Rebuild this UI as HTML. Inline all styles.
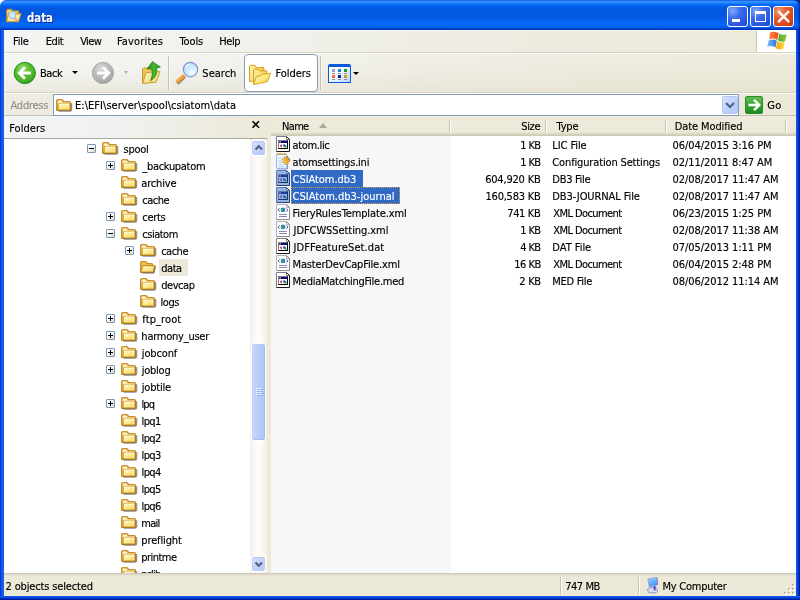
<!DOCTYPE html>
<html><head><meta charset="utf-8"><title>data</title>
<style>
*{box-sizing:border-box}
html,body{margin:0;padding:0}
body{width:800px;height:600px;overflow:hidden;background:#fff;position:relative;
 font-family:"DejaVu Sans Condensed","Liberation Sans",sans-serif;font-size:11px;color:#000;line-height:17px}
#root{position:absolute;left:0;top:0;width:800px;height:600px;will-change:transform;background:#ECE9D8;border-radius:6px 0 0 0}
.a{position:absolute}
.t{position:absolute;white-space:pre;height:17px;line-height:17px;-webkit-text-stroke:0.15px currentColor}
svg{position:absolute;overflow:visible}
#title{left:0;top:0;width:800px;height:30px;border-radius:6px 7px 0 0;box-shadow:inset -2px 0 2px -1px rgba(0,20,130,0.75);
 background:linear-gradient(to bottom,#0A4EDC 0%,#2C84FC 3%,#3C94FF 6%,#2086FF 10%,#0870FA 14%,#0562EE 20%,#0359E2 27%,#0357E0 55%,#0460EE 68%,#0468FA 78%,#0467F8 87%,#045CE8 91%,#0344CC 95.5%,#022EB6 100%)}
#rebar{left:4px;top:30px;width:792px;height:64px;background:linear-gradient(to right,#F4F4F2 0%,#F1F1EC 30%,#EEECE2 60%,#ECE9D8 100%)}
#abar{left:4px;top:94px;width:792px;height:22px;background:linear-gradient(to right,#EEECE2 0%,#ECE9D8 60%);border-bottom:1px solid #C6C2AE}
#fhdr{left:4px;top:116px;width:263px;height:22px;background:linear-gradient(to right,#F2F4F7 0%,#F0F1F1 40%,#ECE9D8 100%)}
#bl{left:0;top:30px;width:4px;height:570px;background:linear-gradient(to right,#0831D9 0,#0831D9 1px,#0C5AE6 1px,#0C5AE6 3px,#1464EC 3px)}
#br{left:796px;top:30px;width:4px;height:570px;background:linear-gradient(to right,#0C5AE8 0,#0C5AE8 1px,#0A48DC 1px,#0A48DC 2px,#0832C8 2px,#0832C8 3px,#001EAC 3px)}
#bb{left:0;top:596px;width:800px;height:4px;background:linear-gradient(to bottom,#0C5AE8 0,#0C5AE8 1px,#0A48DC 1px,#0A48DC 2px,#0630C4 2px,#0630C4 3px,#001CA4 3px)}
.cb{position:absolute;top:6px;width:21px;height:21px;border:1px solid #fff;border-radius:3px;
 background:radial-gradient(circle at 25% 20%,#86A8FC 0%,#3C6EEC 35%,#2A58DE 70%,#2048CA 100%)}
.cb.x{background:radial-gradient(circle at 25% 20%,#F09878 0%,#E65C32 35%,#DA461E 70%,#C23810 100%)}
.hl{position:absolute;height:1px;left:4px;width:792px}
.vl{position:absolute;width:1px}
.sel{position:absolute;background:#316AC5;height:17px}
.hdr{position:absolute;top:116px;height:20px;background:linear-gradient(to bottom,#EFECDE 0,#ECE9D8 16px,#E4E1CF 17px,#DAD6C3 18px,#CECAB6 19px,#CECAB6 20px)}
</style></head>
<body>
<div id="root">
<svg width="0" height="0" style="left:0;top:0"><defs>
<linearGradient id="fg" x1="0" y1="0" x2="1" y2="1"><stop offset="0" stop-color="#FFFAC8"/><stop offset="0.5" stop-color="#FDEC94"/><stop offset="1" stop-color="#F4D060"/></linearGradient>
<symbol id="fold" viewBox="0 0 16 16" overflow="visible">
 <path d="M2.6 14.2 H14 Q15.7 14.2 15.7 12.6 V6.2" fill="none" stroke="#3C4464" stroke-width="1.2" opacity="0.6"/>
 <path d="M0.6 12.4 V3.9 Q0.6 2.5 2 2.5 H5.2 Q6.3 2.5 6.9 3.4 L7.6 4.5 H13.2 Q14.5 4.5 14.5 5.8 V12.4 Q14.5 13.4 13.4 13.4 H1.7 Q0.6 13.4 0.6 12.4 Z" fill="#E8B846" stroke="#C48E2A" stroke-width="1.25"/>
 <path d="M1 12.6 Q1.2 13.4 2 13.4 H13.4 Q14.5 13.4 14.5 12.4 V6" fill="none" stroke="#AC7A22" stroke-width="1.35"/>
 <path d="M1.7 3.5 H5.3 L6.6 5.4 H13.4 V6.6 H1.7 Z" fill="#FFF4CC"/>
 <path d="M2.7 6.6 H13.4 V12.4 H2.7 Z" fill="url(#fg)"/>
 <path d="M2.2 6.3 H13.8 M2.3 6.3 V12.6" stroke="#D4A238" stroke-width="0.9" fill="none"/>
 <path d="M3 7.1 H13.2" stroke="#FFFEF0" stroke-width="0.7"/>
 <path d="M12.3 7 V12.3" stroke="#FFF6B8" stroke-width="0.8" opacity="0.9"/>
</symbol>
<symbol id="foldo" viewBox="0 0 16 16" overflow="visible">
 <path d="M0.6 12.4 V3.9 Q0.6 2.5 2 2.5 H5 Q6 2.5 6.6 3.4 L7.3 4.5 H11.4 Q12.6 4.5 12.6 5.8 V13.4 H1.7 Q0.6 13.4 0.6 12.4 Z" fill="#EEC048" stroke="#C48E2A" stroke-width="1.25"/>
 <path d="M2.8 6.6 H14.9 L13.5 13.4 H0.9 Z" fill="url(#fg)" stroke="#C6942E" stroke-width="1.1" stroke-linejoin="round"/>
 <path d="M1 13.4 H13.5 L14.9 6.8" fill="none" stroke="#AC7A22" stroke-width="1.35" stroke-linejoin="round"/>
 <path d="M2.6 14.3 H14 L15.6 8" fill="none" stroke="#3C4464" stroke-width="1" opacity="0.5"/>
</symbol>
<symbol id="icw" viewBox="0 0 16 17" overflow="visible">
 <path d="M1.5 0.5 H11.5 L14.5 3.5 V15.5 H1.5 Z" fill="#fff"/>
 <path d="M1.5 15.5 V0.5 H11.5" fill="none" stroke="#808080" stroke-width="1"/>
 <path d="M11.5 0.5 V3.5 H14.5" fill="#fff" stroke="#808080" stroke-width="1"/>
 <path d="M11.5 0.5 L14.5 3.5 V15.5 H1.5" fill="none" stroke="#1C1C1C" stroke-width="1"/>
 <rect x="3.5" y="4.5" width="9" height="8" fill="#fff" stroke="#808080" stroke-width="1"/>
 <path d="M12.5 4.5 V12.5 H3.5" fill="none" stroke="#000" stroke-width="1"/>
 <rect x="4" y="5" width="8" height="2" fill="#08088C"/>
 <rect x="4.5" y="5.2" width="1.3" height="1.3" fill="#FFE040"/>
 <path d="M6.8 8 V11.4 L4.6 9.7 Z" fill="#E81818"/>
 <circle cx="9.3" cy="9.6" r="1.3" fill="#1848E8"/><circle cx="10.5" cy="10.6" r="1.1" fill="#18A838"/>
</symbol>
<symbol id="icws" viewBox="0 0 16 17" overflow="visible">
 <path d="M1.5 0.5 H11.5 L14.5 3.5 V15.5 H1.5 Z" fill="#98B4E2"/>
 <path d="M1.5 15.5 V0.5 H11.5" fill="none" stroke="#587AB8" stroke-width="1"/>
 <path d="M11.5 0.5 V3.5 H14.5" fill="#B0C6EA" stroke="#587AB8" stroke-width="1"/>
 <path d="M11.5 0.5 L14.5 3.5 V15.5 H1.5" fill="none" stroke="#28447C" stroke-width="1"/>
 <rect x="3.5" y="4.5" width="9" height="8" fill="#98B4E2" stroke="#5876AC" stroke-width="1"/>
 <path d="M12.5 4.5 V12.5 H3.5" fill="none" stroke="#183468" stroke-width="1"/>
 <rect x="4" y="5" width="8" height="2" fill="#1C3CA8"/>
 <rect x="4.5" y="5.2" width="1.3" height="1.3" fill="#98A482"/>
 <path d="M6.8 8 V11.4 L4.6 9.7 Z" fill="#8C4070"/>
 <circle cx="9.3" cy="9.6" r="1.3" fill="#2458D8"/><circle cx="10.5" cy="10.6" r="1.1" fill="#248880"/>
</symbol>
<symbol id="icx" viewBox="0 0 16 17" overflow="visible">
 <path d="M1.5 0.5 H11.5 L14.5 3.5 V15.5 H1.5 Z" fill="#fff"/>
 <path d="M1.5 15.5 V0.5 H11.5" fill="none" stroke="#B4B4B4" stroke-width="1"/>
 <path d="M11.5 0.5 V3.5 H14.5" fill="#F4F4F4" stroke="#B0B0B0" stroke-width="1"/>
 <path d="M11.5 0.5 L14.5 3.5 V15.5 H1.5" fill="none" stroke="#8C8C8C" stroke-width="1"/>
 <path d="M4.7 4.4 L3.1 6 L4.7 7.6 M11.3 4.4 L12.9 6 L11.3 7.6" fill="none" stroke="#585888" stroke-width="1"/>
 <circle cx="8" cy="5.9" r="2.3" fill="#2A7CE0"/><path d="M7 4.2 Q9 4.8 8.4 6.2 Q7 7.2 7.6 8 Q6 7.4 6 5.9 Z" fill="#34B050"/>
 <path d="M4 10.5 H12 M4 12.5 H12" stroke="#8888B8" stroke-width="1"/>
</symbol>
<symbol id="icn" viewBox="0 0 16 17" overflow="visible">
 <path d="M2.4 15.9 H12.4 V3" fill="none" stroke="#48587C" stroke-width="1" opacity="0.7"/>
 <path d="M1.5 1.5 H11.8 V15.3 H1.5 Z" fill="#EAF7FE" stroke="#A8B4E0" stroke-width="1"/>
 <path d="M3.5 5.5 H8 M3.5 7.5 H7 M3.5 9.5 H7 M3.5 11.5 H9 M3.5 13.5 H9" stroke="#B8DCF6" stroke-width="1"/>
 <path d="M2 1 H11.5" stroke="#D8A028" stroke-width="2.2" stroke-dasharray="1.5 0.9"/>
 <circle cx="11.2" cy="7.4" r="3.1" fill="none" stroke="#D8901C" stroke-width="2" stroke-dasharray="1.5 0.93"/>
 <circle cx="11.2" cy="7.4" r="2.9" fill="#F0B028"/>
 <path d="M11.6 4.2 A3.3 3.3 0 0 1 14.4 7.8" fill="none" stroke="#58508C" stroke-width="1" opacity="0.7"/>
 <circle cx="10.6" cy="7.6" r="1.5" fill="#F8CC58"/>
 <circle cx="11.4" cy="7" r="0.9" fill="#C88820"/>
</symbol>
</defs></svg>

<div class="a" style="left:788px;top:0;width:12px;height:12px;background:linear-gradient(225deg,#08208C 0%,#0A3CC4 45%,#0A4CDC 100%)"></div>
<div class="a" id="title"></div>
<div class="a" id="bl"></div><div class="a" id="br"></div><div class="a" id="bb"></div>
<div class="a" id="rebar"></div><div class="a" id="abar"></div><div class="a" id="fhdr"></div>
<div class="a" style="left:4px;top:54px;width:792px;height:38px;background:linear-gradient(to bottom,rgba(255,255,255,0.12) 0%,rgba(236,233,216,0) 40%,rgba(224,220,196,0.4) 100%)"></div>
<svg style="left:5px;top:6px" width="17" height="18.5" viewBox="0 0 17 17" preserveAspectRatio="none">
<path d="M1.5 4.5 L2.5 3 L6.5 3 L7.5 4.5 L13.5 4.5 L13.5 13.5 L1.5 13.5 Z" fill="#F3D36B" stroke="#B98A2A" stroke-width="1"/>
<path d="M3.5 7 L16 7 L13.5 14.5 L1.5 14.5 Z" fill="#FBE89A" stroke="#C2932F" stroke-width="1"/>
<circle cx="7.3" cy="8.3" r="3.4" fill="#CFE6FA" stroke="#9CBCDD" stroke-width="1"/>
<path d="M9.8 11 L12.6 14.4" stroke="#D8A070" stroke-width="1.6"/>
</svg>
<div class="t" style="left:27px;top:9px;font-weight:bold;font-size:13px;color:#fff;text-shadow:1px 1px 0 #0A1883;line-height:18px;height:18px;transform:scaleX(0.87);transform-origin:0 0">data</div>
<div class="cb" style="left:727px"><div class="a" style="left:4px;top:12px;width:8px;height:3px;background:#fff"></div></div>
<div class="cb" style="left:750px"><div class="a" style="left:4px;top:4px;width:11px;height:11px;border:1px solid #fff;border-top-width:3px"></div></div>
<div class="cb x" style="left:773px"><svg style="left:0;top:0" width="19" height="19" viewBox="0 0 19 19"><path d="M5 5 L14.2 14.2 M14.2 5 L5 14.2" stroke="#fff" stroke-width="2.4" stroke-linecap="square"/></svg></div>
<div class="t" style="left:12.95px;top:33px;letter-spacing:-0.183px;">File</div>
<div class="t" style="left:45.75px;top:33px;letter-spacing:-0.45px;">Edit</div>
<div class="t" style="left:80.15px;top:33px;letter-spacing:-0.55px;">View</div>
<div class="t" style="left:116.95px;top:33px;letter-spacing:0.181px;">Favorites</div>
<div class="t" style="left:179.55px;top:33px;letter-spacing:-0.138px;">Tools</div>
<div class="t" style="left:219.15px;top:33px;letter-spacing:-0.383px;">Help</div>
<div class="a" style="left:756px;top:30px;width:40px;height:22px;background:#fff;border-left:1px solid #C9C5B5"></div>
<svg style="left:760px;top:30px" width="32" height="22" viewBox="760 30 32 22">
<defs><linearGradient id="fr" x1="0" y1="0" x2="1" y2="0"><stop offset="0" stop-color="#FF8A48"/><stop offset="1" stop-color="#E8481C"/></linearGradient>
<linearGradient id="fgn" x1="0" y1="0" x2="1" y2="0"><stop offset="0" stop-color="#58A828"/><stop offset="1" stop-color="#88CC3C"/></linearGradient>
<linearGradient id="fb" x1="0" y1="0" x2="1" y2="0"><stop offset="0" stop-color="#78BCF8"/><stop offset="1" stop-color="#2C74D0"/></linearGradient>
<linearGradient id="fy" x1="0" y1="0" x2="1" y2="0"><stop offset="0" stop-color="#F0A818"/><stop offset="1" stop-color="#FFD838"/></linearGradient></defs>
<path d="M770 32.4 C773 31.2 775.6 31.6 778.6 33.2 L777.2 39.9 C774.4 38.3 772 38 769.1 39.2 Z" fill="url(#fr)"/>
<path d="M779.3 33.8 C782 35.2 784.2 35.2 786.8 33.9 L785.3 40.9 C782.8 42.2 780.6 42.1 777.9 40.6 Z" fill="url(#fgn)"/>
<path d="M768.8 40.2 C771.6 39 774.2 39.4 776.9 40.8 L775.4 47.4 C772.6 45.8 770.2 45.6 767.2 46.8 Z" fill="url(#fb)"/>
<path d="M777.4 41.6 C780 43 782.2 43 784.8 41.8 L783.3 48.6 C780.8 49.8 778.4 49.6 775.8 48.2 Z" fill="url(#fy)"/>
</svg>
<div class="hl" style="top:30px;background:rgba(255,255,255,0.55)"></div>
<div class="hl" style="top:52px;background:#D6D2C2"></div><div class="hl" style="top:53px;background:#fff"></div>
<svg style="left:13px;top:61px" width="24" height="24" viewBox="0 0 24 24">
<defs><radialGradient id="gb" cx="40%" cy="30%" r="70%"><stop offset="0" stop-color="#9CE070"/><stop offset="0.45" stop-color="#5CBE30"/><stop offset="0.85" stop-color="#48B028"/><stop offset="1" stop-color="#2A9A20"/></radialGradient>
<radialGradient id="gf" cx="40%" cy="30%" r="70%"><stop offset="0" stop-color="#DCDCDA"/><stop offset="0.5" stop-color="#BCBCBA"/><stop offset="1" stop-color="#A6A6A4"/></radialGradient></defs>
<circle cx="11.8" cy="12" r="10.6" fill="url(#gb)" stroke="#189418" stroke-width="1"/>
<path d="M7 12 H18 M12 6.3 L6.3 12 L12 17.7" fill="none" stroke="#fff" stroke-width="2.8" stroke-linejoin="miter"/>
</svg>
<div class="t" style="left:40.05px;top:65px;letter-spacing:-0.483px;">Back</div>
<div class="a" style="left:72.3px;top:71px;border:3px solid transparent;border-top:3.3px solid #000;border-bottom:none"></div>
<svg style="left:91px;top:61px" width="24" height="24" viewBox="0 0 24 24">
<circle cx="12" cy="12" r="10.6" fill="url(#gf)" stroke="#A8A8A4" stroke-width="1"/>
<path d="M17 12 H6 M12 6.3 L17.7 12 L12 17.7" fill="none" stroke="#fff" stroke-width="2.8" stroke-linejoin="miter"/>
</svg>
<div class="a" style="left:123.5px;top:71px;border:2.5px solid transparent;border-top:3px solid #B4B1A4;border-bottom:none"></div>
<svg style="left:140px;top:60px" width="24" height="26" viewBox="140 60 24 26">
<defs><linearGradient id="uf" x1="0" y1="0" x2="1" y2="1"><stop offset="0" stop-color="#FFF8C0"/><stop offset="1" stop-color="#F6D468"/></linearGradient>
<linearGradient id="ua" x1="0" y1="0" x2="1" y2="0"><stop offset="0" stop-color="#1E8A18"/><stop offset="0.5" stop-color="#44B82C"/><stop offset="1" stop-color="#2A9C20"/></linearGradient></defs>
<path d="M142.5 69.2 L143.5 68 L148 68 L149 69.5 L155.2 69.5 L155.2 82 L142.5 83 Z" fill="#EEC858" stroke="#C8982E" stroke-width="1" stroke-linejoin="round"/>
<path d="M146 72.6 L160 71.6 L156 82.2 L142.6 83.5 Z" fill="url(#uf)" stroke="#CC9C30" stroke-width="1" stroke-linejoin="round"/>
<path d="M152.5 61.6 L160.4 67.2 L156.6 67.8 C157.6 73 155.6 78 150.4 80.8 C152.6 76 152.8 72 151.6 68.4 L147 69 Z" fill="url(#ua)" stroke="#1A7A16" stroke-width="0.7" stroke-linejoin="round"/>
</svg>
<div class="vl" style="left:168px;top:56px;height:34px;background:#C5C2B2"></div><div class="vl" style="left:169px;top:56px;height:34px;background:#F8F7F2"></div>
<svg style="left:170px;top:56px" width="40" height="34" viewBox="170 56 40 34">
<defs><radialGradient id="ln" cx="62%" cy="68%" r="75%"><stop offset="0" stop-color="#FFFFFF"/><stop offset="0.35" stop-color="#D4F0FF"/><stop offset="1" stop-color="#A8D8FC"/></radialGradient></defs>
<path d="M177.2 83.4 L184.6 76.4" stroke="#8A8A8A" stroke-width="4" stroke-linecap="butt"/>
<path d="M176.6 82.4 L184.2 75.4" stroke="#F09A34" stroke-width="3.6" stroke-linecap="butt"/>
<path d="M176.2 81.6 L183.4 75" stroke="#F8BC6C" stroke-width="1" stroke-linecap="butt"/>
<circle cx="190.5" cy="69.6" r="7.2" fill="url(#ln)" stroke="#8C94D4" stroke-width="1.2"/>
<path d="M185.6 67.5 A5.4 5.4 0 0 1 190 64.2" fill="none" stroke="#fff" stroke-width="1.1"/>
</svg>
<div class="t" style="left:202.35px;top:65px;letter-spacing:0.01px;">Search</div>
<div class="a" style="left:244px;top:54px;width:74px;height:38px;border:1px solid #8A9DB5;border-radius:4px;background:#fff"></div>
<svg style="left:244px;top:58px" width="34" height="32" viewBox="244 58 34 32">
<defs><linearGradient id="tf1" x1="0" y1="0" x2="1" y2="0.3"><stop offset="0" stop-color="#FFF4A8"/><stop offset="1" stop-color="#F6CC48"/></linearGradient>
<linearGradient id="tf2" x1="0" y1="0" x2="1" y2="1"><stop offset="0" stop-color="#FFFAD0"/><stop offset="0.5" stop-color="#FDE878"/><stop offset="1" stop-color="#F4CC48"/></linearGradient></defs>
<path d="M249.5 81.6 V66 L250.4 65.3 H255 L256.2 67.6 H263.8 V79 Z" fill="url(#tf1)" stroke="#D29C22" stroke-width="1" stroke-linejoin="round"/>
<path d="M253.6 84.2 V70 L254.5 69.3 H258.6 L259.7 70.9 H266.8 V80 Z" fill="url(#tf1)" stroke="#D29C22" stroke-width="1" stroke-linejoin="round"/>
<path d="M256.6 76.3 L260.4 76.1 L261.8 74.4 L270.6 73.3 L267.4 81.7 L253.7 84.5 Z" fill="url(#tf2)" stroke="#D8A428" stroke-width="1" stroke-linejoin="round"/>
</svg>
<div class="t" style="left:275.45px;top:65px;letter-spacing:-0.025px;">Folders</div>
<div class="vl" style="left:320px;top:56px;height:34px;background:#C5C2B2"></div><div class="vl" style="left:321px;top:56px;height:34px;background:#F8F7F2"></div>
<div class="a" style="left:328px;top:64px;width:23px;height:19px;border:1px solid #0A5ADC;border-top:3px solid #0A5ADC;border-radius:2px 2px 0 0;background:linear-gradient(135deg,#fff 30%,#B8D4F8 100%)"></div>
<div class="a" style="left:332px;top:69px;width:3px;height:3px;background:#9C96D6"></div><div class="a" style="left:332px;top:73px;width:3px;height:1px;background:#8C8C9C"></div>
<div class="a" style="left:338px;top:69px;width:3px;height:3px;background:#1E7EE8"></div><div class="a" style="left:338px;top:73px;width:3px;height:1px;background:#8C8C9C"></div>
<div class="a" style="left:344px;top:69px;width:3px;height:3px;background:#1C9A1C"></div><div class="a" style="left:344px;top:73px;width:3px;height:1px;background:#8C8C9C"></div>
<div class="a" style="left:332px;top:75px;width:3px;height:3px;background:#F96B42"></div><div class="a" style="left:332px;top:79px;width:3px;height:1px;background:#8C8C9C"></div>
<div class="a" style="left:338px;top:75px;width:3px;height:3px;background:#0B2A94"></div><div class="a" style="left:338px;top:79px;width:3px;height:1px;background:#8C8C9C"></div>
<div class="a" style="left:344px;top:75px;width:3px;height:3px;background:#D19A13"></div><div class="a" style="left:344px;top:79px;width:3px;height:1px;background:#8C8C9C"></div>
<div class="a" style="left:353.2px;top:72px;border:3px solid transparent;border-top:3px solid #000;border-bottom:none"></div>
<div class="hl" style="top:92px;background:#D6D2C2"></div><div class="hl" style="top:93px;background:#fff"></div>
<div class="t" style="left:10.55px;top:97px;letter-spacing:-0.258px;color:#8E8E8E;">Address</div>
<div class="a" style="left:53px;top:94px;width:686px;height:22px;border:1px solid #7F9DB9;background:#fff"></div>
<svg style="left:56px;top:97px" width="16" height="16" viewBox="0 0 16 16"><use href="#fold"/></svg>
<div class="t" style="left:75.05px;top:97px;letter-spacing:0.031px;">E:\EFI\server\spool\csiatom\data</div>
<div class="a" style="left:722px;top:96px;width:16px;height:18px;border-radius:2px;border:1px solid #B4C8F6;background:linear-gradient(135deg,#D4E0FC,#B0C6F8)"></div>
<svg style="left:722px;top:96px" width="16" height="18" viewBox="0 0 16 18"><path d="M4 7 L8 11 L12 7" fill="none" stroke="#4D6185" stroke-width="2"/></svg>
<div class="a" style="left:745px;top:96px;width:18px;height:18px;border-radius:2px;border:1px solid #2C8A2C;background:linear-gradient(to bottom,#5CC050,#1E8A1E)"></div>
<svg style="left:745px;top:96px" width="18" height="18" viewBox="0 0 18 18"><path d="M3.5 9 H14 M9 3.8 L14.3 9 L9 14.2" fill="none" stroke="#fff" stroke-width="2.4"/></svg>
<div class="t" style="left:767.35px;top:97px;letter-spacing:0.25px;">Go</div>
<div class="t" style="left:9.25px;top:120px;letter-spacing:0.042px;">Folders</div>
<svg style="left:251px;top:120px" width="10" height="9" viewBox="0 0 10 9"><path d="M1.5 1.2 L8 7.7 M8 1.2 L1.5 7.7" stroke="#000" stroke-width="1.6"/></svg>
<div class="a" style="left:4px;top:138px;width:263px;height:435px;background:#fff;border-top:1px solid #ACA899"></div>
<div class="a" style="left:250px;top:139px;width:17px;height:434px;background:linear-gradient(to right,#F3F1EC,#FEFEFB 50%,#F1EFE6)"></div>
<div class="a" style="left:251px;top:140px;width:15px;height:16px;border-radius:3px;background:#fff"></div><div class="a" style="left:252px;top:141px;width:13px;height:14px;border-radius:2px;border:1px solid #B8CAF6;background:linear-gradient(135deg,#D2DEFC,#B6C9F8)"></div><svg style="left:0;top:0" width="800" height="600" viewBox="0 0 800 600"><path d="M255.5 149.5 L258.75 146.2 L262 149.5" fill="none" stroke="#4D6185" stroke-width="2"/></svg>
<div class="a" style="left:251px;top:556px;width:15px;height:16px;border-radius:3px;background:#fff"></div><div class="a" style="left:252px;top:557px;width:13px;height:14px;border-radius:2px;border:1px solid #B8CAF6;background:linear-gradient(135deg,#D2DEFC,#B6C9F8)"></div><svg style="left:0;top:0" width="800" height="600" viewBox="0 0 800 600"><path d="M255.5 562.5 L258.75 565.8 L262 562.5" fill="none" stroke="#4D6185" stroke-width="2"/></svg>
<div class="a" style="left:251px;top:343px;width:15px;height:98px;border:1px solid #fff;border-radius:3px;box-shadow:inset -1px -1px 0 #A4BAF0;background:linear-gradient(to right,#C8D6FB,#BACDF9 50%,#B0C4F6)"></div>
<div class="a" style="left:256px;top:388px;width:6px;height:1px;background:#EEF4FE"></div><div class="a" style="left:257px;top:389px;width:6px;height:1px;background:#8CB0F8"></div>
<div class="a" style="left:256px;top:390px;width:6px;height:1px;background:#EEF4FE"></div><div class="a" style="left:257px;top:391px;width:6px;height:1px;background:#8CB0F8"></div>
<div class="a" style="left:256px;top:392px;width:6px;height:1px;background:#EEF4FE"></div><div class="a" style="left:257px;top:393px;width:6px;height:1px;background:#8CB0F8"></div>
<div class="a" style="left:256px;top:394px;width:6px;height:1px;background:#EEF4FE"></div><div class="a" style="left:257px;top:395px;width:6px;height:1px;background:#8CB0F8"></div>
<div class="a" style="left:0;top:139px;width:250px;height:434px;overflow:hidden">
<div class="a" style="left:87px;top:5px;width:9px;height:9px;border:1px solid #7898B5;border-radius:1px;background:linear-gradient(135deg,#fff 40%,#D8D4C4)"><div class="a" style="left:1px;top:3px;width:5px;height:1px;background:#000"></div></div>
<svg style="left:102px;top:1px" width="16" height="16" viewBox="0 0 16 16"><use href="#fold"/></svg>
<div class="t" style="left:123.55px;top:2px;letter-spacing:-0.287px">spool</div>
<div class="a" style="left:106px;top:22px;width:9px;height:9px;border:1px solid #7898B5;border-radius:1px;background:linear-gradient(135deg,#fff 40%,#D8D4C4)"><div class="a" style="left:1px;top:3px;width:5px;height:1px;background:#000"></div><div class="a" style="left:3px;top:1px;width:1px;height:5px;background:#000"></div></div>
<svg style="left:121px;top:18px" width="16" height="16" viewBox="0 0 16 16"><use href="#fold"/></svg>
<div class="t" style="left:142.35px;top:19px;letter-spacing:-0.315px">_backupatom</div>
<svg style="left:121px;top:35px" width="16" height="16" viewBox="0 0 16 16"><use href="#fold"/></svg>
<div class="t" style="left:141.35px;top:36px;letter-spacing:-0.192px">archive</div>
<svg style="left:121px;top:52px" width="16" height="16" viewBox="0 0 16 16"><use href="#fold"/></svg>
<div class="t" style="left:142.35px;top:53px;letter-spacing:-0.538px">cache</div>
<div class="a" style="left:106px;top:73px;width:9px;height:9px;border:1px solid #7898B5;border-radius:1px;background:linear-gradient(135deg,#fff 40%,#D8D4C4)"><div class="a" style="left:1px;top:3px;width:5px;height:1px;background:#000"></div><div class="a" style="left:3px;top:1px;width:1px;height:5px;background:#000"></div></div>
<svg style="left:121px;top:69px" width="16" height="16" viewBox="0 0 16 16"><use href="#fold"/></svg>
<div class="t" style="left:142.35px;top:70px;letter-spacing:-0.313px">certs</div>
<div class="a" style="left:106px;top:90px;width:9px;height:9px;border:1px solid #7898B5;border-radius:1px;background:linear-gradient(135deg,#fff 40%,#D8D4C4)"><div class="a" style="left:1px;top:3px;width:5px;height:1px;background:#000"></div></div>
<svg style="left:121px;top:86px" width="16" height="16" viewBox="0 0 16 16"><use href="#fold"/></svg>
<div class="t" style="left:142.35px;top:87px;letter-spacing:-0.508px">csiatom</div>
<div class="a" style="left:125px;top:107px;width:9px;height:9px;border:1px solid #7898B5;border-radius:1px;background:linear-gradient(135deg,#fff 40%,#D8D4C4)"><div class="a" style="left:1px;top:3px;width:5px;height:1px;background:#000"></div><div class="a" style="left:3px;top:1px;width:1px;height:5px;background:#000"></div></div>
<svg style="left:140px;top:103px" width="16" height="16" viewBox="0 0 16 16"><use href="#fold"/></svg>
<div class="t" style="left:161.15px;top:104px;letter-spacing:-0.488px">cache</div>
<svg style="left:140px;top:120px" width="16" height="16" viewBox="0 0 16 16"><use href="#foldo"/></svg>
<div class="a" style="left:159px;top:120px;width:29px;height:17px;background:#ECE9D8"></div>
<div class="t" style="left:161.15px;top:121px;letter-spacing:-0.417px">data</div>
<svg style="left:140px;top:137px" width="16" height="16" viewBox="0 0 16 16"><use href="#fold"/></svg>
<div class="t" style="left:161.15px;top:138px;letter-spacing:-0.43px">devcap</div>
<svg style="left:140px;top:154px" width="16" height="16" viewBox="0 0 16 16"><use href="#fold"/></svg>
<div class="t" style="left:160.55px;top:155px;letter-spacing:-0.45px">logs</div>
<div class="a" style="left:106px;top:175px;width:9px;height:9px;border:1px solid #7898B5;border-radius:1px;background:linear-gradient(135deg,#fff 40%,#D8D4C4)"><div class="a" style="left:1px;top:3px;width:5px;height:1px;background:#000"></div><div class="a" style="left:3px;top:1px;width:1px;height:5px;background:#000"></div></div>
<svg style="left:121px;top:171px" width="16" height="16" viewBox="0 0 16 16"><use href="#fold"/></svg>
<div class="t" style="left:142.35px;top:172px;letter-spacing:0.093px">ftp_root</div>
<div class="a" style="left:106px;top:192px;width:9px;height:9px;border:1px solid #7898B5;border-radius:1px;background:linear-gradient(135deg,#fff 40%,#D8D4C4)"><div class="a" style="left:1px;top:3px;width:5px;height:1px;background:#000"></div><div class="a" style="left:3px;top:1px;width:1px;height:5px;background:#000"></div></div>
<svg style="left:121px;top:188px" width="16" height="16" viewBox="0 0 16 16"><use href="#fold"/></svg>
<div class="t" style="left:141.35px;top:189px;letter-spacing:-0.241px">harmony_user</div>
<div class="a" style="left:106px;top:209px;width:9px;height:9px;border:1px solid #7898B5;border-radius:1px;background:linear-gradient(135deg,#fff 40%,#D8D4C4)"><div class="a" style="left:1px;top:3px;width:5px;height:1px;background:#000"></div><div class="a" style="left:3px;top:1px;width:1px;height:5px;background:#000"></div></div>
<svg style="left:121px;top:205px" width="16" height="16" viewBox="0 0 16 16"><use href="#fold"/></svg>
<div class="t" style="left:141.85px;top:206px;letter-spacing:-0.158px">jobconf</div>
<div class="a" style="left:106px;top:226px;width:9px;height:9px;border:1px solid #7898B5;border-radius:1px;background:linear-gradient(135deg,#fff 40%,#D8D4C4)"><div class="a" style="left:1px;top:3px;width:5px;height:1px;background:#000"></div><div class="a" style="left:3px;top:1px;width:1px;height:5px;background:#000"></div></div>
<svg style="left:121px;top:222px" width="16" height="16" viewBox="0 0 16 16"><use href="#fold"/></svg>
<div class="t" style="left:141.85px;top:223px;letter-spacing:-0.27px">joblog</div>
<svg style="left:121px;top:239px" width="16" height="16" viewBox="0 0 16 16"><use href="#fold"/></svg>
<div class="t" style="left:141.85px;top:240px;letter-spacing:-0.225px">jobtile</div>
<div class="a" style="left:106px;top:260px;width:9px;height:9px;border:1px solid #7898B5;border-radius:1px;background:linear-gradient(135deg,#fff 40%,#D8D4C4)"><div class="a" style="left:1px;top:3px;width:5px;height:1px;background:#000"></div><div class="a" style="left:3px;top:1px;width:1px;height:5px;background:#000"></div></div>
<svg style="left:121px;top:256px" width="16" height="16" viewBox="0 0 16 16"><use href="#fold"/></svg>
<div class="t" style="left:141.55px;top:257px;letter-spacing:-0.925px">lpq</div>
<svg style="left:121px;top:273px" width="16" height="16" viewBox="0 0 16 16"><use href="#fold"/></svg>
<div class="t" style="left:141.55px;top:274px;letter-spacing:-0.617px">lpq1</div>
<svg style="left:121px;top:290px" width="16" height="16" viewBox="0 0 16 16"><use href="#fold"/></svg>
<div class="t" style="left:141.55px;top:291px;letter-spacing:-0.617px">lpq2</div>
<svg style="left:121px;top:307px" width="16" height="16" viewBox="0 0 16 16"><use href="#fold"/></svg>
<div class="t" style="left:141.55px;top:308px;letter-spacing:-0.617px">lpq3</div>
<svg style="left:121px;top:324px" width="16" height="16" viewBox="0 0 16 16"><use href="#fold"/></svg>
<div class="t" style="left:141.55px;top:325px;letter-spacing:-0.617px">lpq4</div>
<svg style="left:121px;top:341px" width="16" height="16" viewBox="0 0 16 16"><use href="#fold"/></svg>
<div class="t" style="left:141.55px;top:342px;letter-spacing:-0.617px">lpq5</div>
<svg style="left:121px;top:358px" width="16" height="16" viewBox="0 0 16 16"><use href="#fold"/></svg>
<div class="t" style="left:141.55px;top:359px;letter-spacing:-0.617px">lpq6</div>
<svg style="left:121px;top:375px" width="16" height="16" viewBox="0 0 16 16"><use href="#fold"/></svg>
<div class="t" style="left:141.35px;top:376px;letter-spacing:-0.783px">mail</div>
<svg style="left:121px;top:392px" width="16" height="16" viewBox="0 0 16 16"><use href="#fold"/></svg>
<div class="t" style="left:141.35px;top:393px;letter-spacing:-0.144px">preflight</div>
<svg style="left:121px;top:409px" width="16" height="16" viewBox="0 0 16 16"><use href="#fold"/></svg>
<div class="t" style="left:141.35px;top:410px;letter-spacing:-0.558px">printme</div>
<svg style="left:121px;top:426px" width="16" height="16" viewBox="0 0 16 16"><use href="#fold"/></svg>
<div class="t" style="left:141.35px;top:427px;letter-spacing:-0.838px">pslib</div>
</div>
<div class="a" style="left:271px;top:136px;width:525px;height:437px;background:#fff"></div>
<div class="a" style="left:271px;top:136px;width:180px;height:437px;background:#F7F7F7"></div>
<div class="hdr" style="left:271px;width:525px"></div>
<div class="vl" style="left:449px;top:119px;height:13px;background:#C5C2B2"></div><div class="vl" style="left:450px;top:119px;height:13px;background:#fff"></div>
<div class="vl" style="left:545px;top:119px;height:13px;background:#C5C2B2"></div><div class="vl" style="left:546px;top:119px;height:13px;background:#fff"></div>
<div class="vl" style="left:665px;top:119px;height:13px;background:#C5C2B2"></div><div class="vl" style="left:666px;top:119px;height:13px;background:#fff"></div>
<div class="vl" style="left:785px;top:119px;height:13px;background:#C5C2B2"></div><div class="vl" style="left:786px;top:119px;height:13px;background:#fff"></div>
<div class="t" style="left:282.05px;top:118px;letter-spacing:-0.683px;">Name</div>
<div class="a" style="left:319px;top:123px;border:4.5px solid transparent;border-bottom:5px solid #ACA899;border-top:none"></div>
<div class="t" style="left:521.15px;top:118px;letter-spacing:-0.283px;">Size</div>
<div class="t" style="left:556.55px;top:118px;letter-spacing:-0.183px;">Type</div>
<div class="t" style="left:674.85px;top:118px;letter-spacing:-0.121px;">Date Modified</div>
<svg style="left:275px;top:136px" width="16" height="17" viewBox="0 0 16 17"><use href="#icw"/></svg>
<div class="t" style="left:292.55px;top:137px;letter-spacing:-0.364px;">atom.lic</div>
<div class="t" style="left:520.15px;top:137px;letter-spacing:-0.583px;">1 KB</div>
<div class="t" style="left:552.35px;top:137px;letter-spacing:-0.093px;">LIC File</div>
<div class="t" style="left:672.45px;top:137px;letter-spacing:-0.05px;">06/04/2015 3:16 PM</div>
<svg style="left:275px;top:153px" width="16" height="17" viewBox="0 0 16 17"><use href="#icn"/></svg>
<div class="t" style="left:292.55px;top:154px;letter-spacing:-0.21px;">atomsettings.ini</div>
<div class="t" style="left:520.15px;top:154px;letter-spacing:-0.583px;">1 KB</div>
<div class="t" style="left:552.35px;top:154px;letter-spacing:-0.15px;">Configuration Settings</div>
<div class="t" style="left:672.45px;top:154px;letter-spacing:-0.062px;">02/11/2011 8:47 AM</div>
<div class="sel" style="left:291px;top:170px;width:72px"></div>
<svg style="left:275px;top:170px" width="16" height="17" viewBox="0 0 16 17"><use href="#icws"/></svg>
<div class="t" style="left:292.55px;top:171px;letter-spacing:-0.055px;color:#fff;">CSIAtom.db3</div>
<div class="t" style="left:485.15px;top:171px;letter-spacing:-0.194px;">604,920 KB</div>
<div class="t" style="left:552.35px;top:171px;letter-spacing:-0.307px;">DB3 File</div>
<div class="t" style="left:672.45px;top:171px;letter-spacing:-0.053px;">02/08/2017 11:47 AM</div>
<div class="sel" style="left:291px;top:187px;width:109px;outline:1px dotted #D9A04A;outline-offset:-1px"></div>
<svg style="left:275px;top:187px" width="16" height="17" viewBox="0 0 16 17"><use href="#icws"/></svg>
<div class="t" style="left:292.55px;top:188px;letter-spacing:0.003px;color:#fff;">CSIAtom.db3-journal</div>
<div class="t" style="left:485.55px;top:188px;letter-spacing:-0.239px;">160,583 KB</div>
<div class="t" style="left:552.35px;top:188px;letter-spacing:-0.097px;">DB3-JOURNAL File</div>
<div class="t" style="left:672.45px;top:188px;letter-spacing:-0.053px;">02/08/2017 11:47 AM</div>
<svg style="left:275px;top:204px" width="16" height="17" viewBox="0 0 16 17"><use href="#icx"/></svg>
<div class="t" style="left:292.55px;top:205px;letter-spacing:-0.121px;">FieryRulesTemplate.xml</div>
<div class="t" style="left:507.25px;top:205px;letter-spacing:-0.37px;">741 KB</div>
<div class="t" style="left:553.35px;top:205px;letter-spacing:-0.586px;">XML Document</div>
<div class="t" style="left:672.45px;top:205px;letter-spacing:-0.05px;">06/23/2015 1:25 PM</div>
<svg style="left:275px;top:221px" width="16" height="17" viewBox="0 0 16 17"><use href="#icx"/></svg>
<div class="t" style="left:293.55px;top:222px;letter-spacing:-0.072px;">JDFCWSSetting.xml</div>
<div class="t" style="left:520.15px;top:222px;letter-spacing:-0.583px;">1 KB</div>
<div class="t" style="left:553.35px;top:222px;letter-spacing:-0.586px;">XML Document</div>
<div class="t" style="left:672.45px;top:222px;letter-spacing:-0.053px;">02/08/2017 11:38 AM</div>
<svg style="left:275px;top:238px" width="16" height="17" viewBox="0 0 16 17"><use href="#icw"/></svg>
<div class="t" style="left:293.55px;top:239px;letter-spacing:0.091px;">JDFFeatureSet.dat</div>
<div class="t" style="left:520.35px;top:239px;letter-spacing:-0.65px;">4 KB</div>
<div class="t" style="left:552.35px;top:239px;letter-spacing:-0.021px;">DAT File</div>
<div class="t" style="left:672.45px;top:239px;letter-spacing:-0.05px;">07/05/2013 1:11 PM</div>
<svg style="left:275px;top:255px" width="16" height="17" viewBox="0 0 16 17"><use href="#icx"/></svg>
<div class="t" style="left:292.55px;top:256px;letter-spacing:-0.166px;">MasterDevCapFile.xml</div>
<div class="t" style="left:514.25px;top:256px;letter-spacing:-0.463px;">16 KB</div>
<div class="t" style="left:553.35px;top:256px;letter-spacing:-0.586px;">XML Document</div>
<div class="t" style="left:672.45px;top:256px;letter-spacing:-0.05px;">06/04/2015 2:48 PM</div>
<svg style="left:275px;top:272px" width="16" height="17" viewBox="0 0 16 17"><use href="#icw"/></svg>
<div class="t" style="left:292.55px;top:273px;letter-spacing:-0.258px;">MediaMatchingFile.med</div>
<div class="t" style="left:519.35px;top:273px;letter-spacing:-0.317px;">2 KB</div>
<div class="t" style="left:552.35px;top:273px;letter-spacing:-0.307px;">MED File</div>
<div class="t" style="left:672.45px;top:273px;letter-spacing:-0.053px;">08/06/2012 11:14 AM</div>
<div class="a" style="left:4px;top:573px;width:792px;height:23px;background:linear-gradient(to bottom,#C5C2B2 0,#D8D4C4 1px,#E4E1D0 2px,#ECE9D8 4px)"></div>
<div class="t" style="left:5.55px;top:578px;letter-spacing:-0.15px;">2 objects selected</div>
<div class="vl" style="left:560px;top:577px;height:17px;background:#C5C2B2"></div><div class="vl" style="left:561px;top:577px;height:17px;background:#fff"></div>
<div class="vl" style="left:638px;top:577px;height:17px;background:#C5C2B2"></div><div class="vl" style="left:639px;top:577px;height:17px;background:#fff"></div>
<div class="t" style="left:565.15px;top:578px;letter-spacing:-0.43px;">747 MB</div>
<svg style="left:640px;top:572px" width="30" height="26" viewBox="640 572 30 26">
<defs><linearGradient id="mc" x1="0.3" y1="0" x2="0.7" y2="1"><stop offset="0" stop-color="#8CD8FF"/><stop offset="1" stop-color="#2E8CF0"/></linearGradient></defs>
<ellipse cx="652.6" cy="590.2" rx="5" ry="2.8" fill="#DCDCF2" stroke="#8484BC" stroke-width="0.9"/>
<path d="M653.6 585.5 L655.4 585 L655.8 590 L653.8 590.4 Z" fill="#4C4CB0"/>
<path d="M647.8 579 L656.7 577.4 L657.3 585 L649.3 587 Z" fill="url(#mc)" stroke="#A4A4DC" stroke-width="1" stroke-linejoin="round"/>
<path d="M656.9 577.6 L657.6 585" stroke="#7C78C4" stroke-width="1"/>
</svg>
<div class="t" style="left:662.55px;top:578px;letter-spacing:-0.255px;">My Computer</div>
<div class="a" style="left:792px;top:584px;width:2px;height:2px;background:#B8B4A2"></div><div class="a" style="left:793px;top:585px;width:2px;height:2px;background:#fff"></div>
<div class="a" style="left:788px;top:588px;width:2px;height:2px;background:#B8B4A2"></div><div class="a" style="left:789px;top:589px;width:2px;height:2px;background:#fff"></div>
<div class="a" style="left:792px;top:588px;width:2px;height:2px;background:#B8B4A2"></div><div class="a" style="left:793px;top:589px;width:2px;height:2px;background:#fff"></div>
<div class="a" style="left:784px;top:592px;width:2px;height:2px;background:#B8B4A2"></div><div class="a" style="left:785px;top:593px;width:2px;height:2px;background:#fff"></div>
<div class="a" style="left:788px;top:592px;width:2px;height:2px;background:#B8B4A2"></div><div class="a" style="left:789px;top:593px;width:2px;height:2px;background:#fff"></div>
<div class="a" style="left:792px;top:592px;width:2px;height:2px;background:#B8B4A2"></div><div class="a" style="left:793px;top:593px;width:2px;height:2px;background:#fff"></div>
</div>
</body></html>
